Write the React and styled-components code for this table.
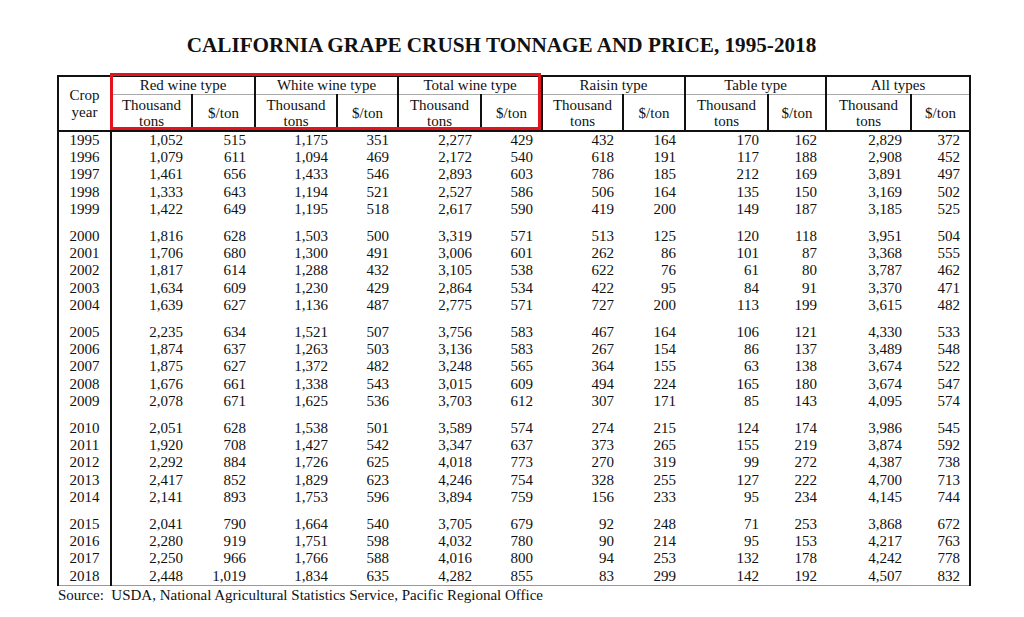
import React from 'react';
import styled, { createGlobalStyle } from 'styled-components';

const GlobalStyle = createGlobalStyle`
  html, body {
    margin: 0;
    padding: 0;
    background: #fff;
  }
  body {
    font-family: "Liberation Serif", "Times New Roman", serif;
    color: #111;
  }
`;

const Page = styled.div`
  width: 1024px;
  height: 617px;
  padding-top: 32px;
  box-sizing: border-box;
`;

const Title = styled.h1`
  margin: 0;
  padding-right: 21px;
  text-align: center;
  font-size: 21.2px;
  line-height: 26px;
  font-weight: bold;
`;

const TableWrap = styled.div`
  position: relative;
  margin: 17px 0 0 57px;
  width: 914px;
`;

const Table = styled.table`
  border-collapse: collapse;
  table-layout: fixed;
  width: 914px;
  border-top: 2px solid #111;
  border-left: 2px solid #111;
  border-right: 2px solid #111;
  border-bottom: 1px solid #999;
  font-size: 15px;
`;

const CropHead = styled.th`
  font-weight: normal;
  line-height: 17px;
  padding: 0;
  border-right: 2px solid #111;
  border-bottom: 2px solid #111;
  vertical-align: middle;
`;

const GroupHead = styled.th`
  font-weight: normal;
  height: 17px;
  line-height: 17px;
  padding: 0;
  border-right: 2px solid #111;
  border-bottom: 1px solid #aaa;
`;

const SubHead = styled.th`
  font-weight: normal;
  height: 35px;
  line-height: 16px;
  padding: 0;
  border-right: 2px solid #111;
  border-bottom: 2px solid #111;
  vertical-align: middle;
`;

const Row = styled.tr`
  td {
    padding-top: ${(p) => (p.$gap ? '10px' : '0')};
  }
`;

const Cell = styled.td`
  line-height: 17.2px;
  padding: 0 9px 0 0;
  text-align: right;
  white-space: nowrap;
`;

const YearCell = styled.td`
  line-height: 17.2px;
  padding: 0;
  text-align: center;
  border-right: 2px solid #111;
`;

const Highlight = styled.div`
  position: absolute;
  left: 53px;
  top: -2px;
  width: 431px;
  height: 57px;
  border: 3px solid #e3141d;
  box-sizing: border-box;
  pointer-events: none;
`;

const Source = styled.p`
  margin: 0 0 0 58px;
  font-size: 15px;
  line-height: 18px;
  white-space: pre;
`;

const widths = [53, 81, 63, 82, 61, 83, 61, 81, 62, 83, 58, 85, 59];

const groups = [
  'Red wine type',
  'White wine type',
  'Total wine type',
  'Raisin type',
  'Table type',
  'All types',
];

const rows = [
  ['1995', '1,052', '515', '1,175', '351', '2,277', '429', '432', '164', '170', '162', '2,829', '372'],
  ['1996', '1,079', '611', '1,094', '469', '2,172', '540', '618', '191', '117', '188', '2,908', '452'],
  ['1997', '1,461', '656', '1,433', '546', '2,893', '603', '786', '185', '212', '169', '3,891', '497'],
  ['1998', '1,333', '643', '1,194', '521', '2,527', '586', '506', '164', '135', '150', '3,169', '502'],
  ['1999', '1,422', '649', '1,195', '518', '2,617', '590', '419', '200', '149', '187', '3,185', '525'],
  ['2000', '1,816', '628', '1,503', '500', '3,319', '571', '513', '125', '120', '118', '3,951', '504'],
  ['2001', '1,706', '680', '1,300', '491', '3,006', '601', '262', '86', '101', '87', '3,368', '555'],
  ['2002', '1,817', '614', '1,288', '432', '3,105', '538', '622', '76', '61', '80', '3,787', '462'],
  ['2003', '1,634', '609', '1,230', '429', '2,864', '534', '422', '95', '84', '91', '3,370', '471'],
  ['2004', '1,639', '627', '1,136', '487', '2,775', '571', '727', '200', '113', '199', '3,615', '482'],
  ['2005', '2,235', '634', '1,521', '507', '3,756', '583', '467', '164', '106', '121', '4,330', '533'],
  ['2006', '1,874', '637', '1,263', '503', '3,136', '583', '267', '154', '86', '137', '3,489', '548'],
  ['2007', '1,875', '627', '1,372', '482', '3,248', '565', '364', '155', '63', '138', '3,674', '522'],
  ['2008', '1,676', '661', '1,338', '543', '3,015', '609', '494', '224', '165', '180', '3,674', '547'],
  ['2009', '2,078', '671', '1,625', '536', '3,703', '612', '307', '171', '85', '143', '4,095', '574'],
  ['2010', '2,051', '628', '1,538', '501', '3,589', '574', '274', '215', '124', '174', '3,986', '545'],
  ['2011', '1,920', '708', '1,427', '542', '3,347', '637', '373', '265', '155', '219', '3,874', '592'],
  ['2012', '2,292', '884', '1,726', '625', '4,018', '773', '270', '319', '99', '272', '4,387', '738'],
  ['2013', '2,417', '852', '1,829', '623', '4,246', '754', '328', '255', '127', '222', '4,700', '713'],
  ['2014', '2,141', '893', '1,753', '596', '3,894', '759', '156', '233', '95', '234', '4,145', '744'],
  ['2015', '2,041', '790', '1,664', '540', '3,705', '679', '92', '248', '71', '253', '3,868', '672'],
  ['2016', '2,280', '919', '1,751', '598', '4,032', '780', '90', '214', '95', '153', '4,217', '763'],
  ['2017', '2,250', '966', '1,766', '588', '4,016', '800', '94', '253', '132', '178', '4,242', '778'],
  ['2018', '2,448', '1,019', '1,834', '635', '4,282', '855', '83', '299', '142', '192', '4,507', '832'],
];

export default function App() {
  return (
    <Page>
      <GlobalStyle />
      <Title>CALIFORNIA GRAPE CRUSH TONNAGE AND PRICE, 1995-2018</Title>

      <TableWrap>
        <Table>
          <colgroup>
            {widths.map((w, i) => (
              <col key={i} style={{ width: w }} />
            ))}
          </colgroup>
          <thead>
            <tr>
              <CropHead rowSpan={2}>
                Crop
                <br />
                year
              </CropHead>
              {groups.map((g) => (
                <GroupHead key={g} colSpan={2}>
                  {g}
                </GroupHead>
              ))}
            </tr>
            <tr>
              {groups.map((g) => (
                <React.Fragment key={g}>
                  <SubHead>
                    Thousand
                    <br />
                    tons
                  </SubHead>
                  <SubHead>$/ton</SubHead>
                </React.Fragment>
              ))}
            </tr>
          </thead>
          <tbody>
            {rows.map((r, i) => (
              <Row key={r[0]} $gap={i > 0 && i % 5 === 0}>
                <YearCell>{r[0]}</YearCell>
                {r.slice(1).map((v, j) => (
                  <Cell key={j}>{v}</Cell>
                ))}
              </Row>
            ))}
          </tbody>
        </Table>
        <Highlight />
      </TableWrap>

      <Source>Source:  USDA, National Agricultural Statistics Service, Pacific Regional Office</Source>
    </Page>
  );
}
